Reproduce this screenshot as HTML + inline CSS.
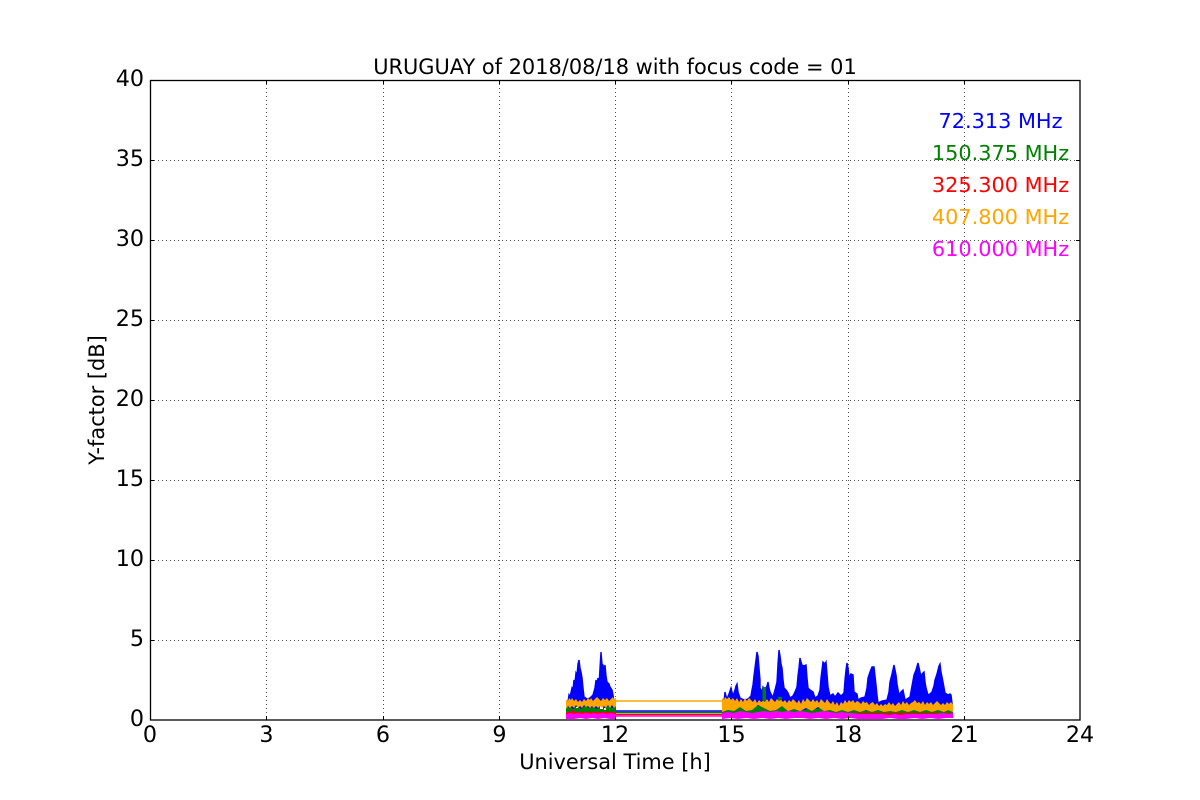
<!DOCTYPE html>
<html><head><meta charset="utf-8"><title>URUGUAY</title>
<style>html,body{margin:0;padding:0;background:#fff}svg{display:block}text{font-family:"DejaVu Sans",sans-serif;fill:#000}</style></head>
<body>
<svg width="1200" height="800" viewBox="0 0 1200 800" xmlns="http://www.w3.org/2000/svg">
<rect width="1200" height="800" fill="#fff"/>
<!-- grid -->
<g stroke="#000" stroke-width="1" stroke-dasharray="1 3" fill="none" opacity=".68">
<path d="M266.5 80V720M383.5 80V720M499.5 80V720M615.5 80V720M731.5 80V720M848.5 80V720M964.5 80V720"/>
<path d="M150 640.5H1080M150 560.5H1080M150 480.5H1080M150 400.5H1080M150 320.5H1080M150 240.5H1080M150 160.5H1080"/>
</g>
<!-- data horizontal connecting lines -->
<g fill="none" stroke-width="1.6">
<path d="M616 701H722" stroke="#ffa500"/>
<path d="M616 711H722" stroke="#0000ff"/>
<path d="M616 712.5H722" stroke="#008000"/>
<path d="M616 714.5H722" stroke="#ff0000"/>
<path d="M616 716H722" stroke="#ff00ff"/>
</g>
<!-- blue -->
<g fill="#0000ff" stroke="#0000ff" stroke-width="1.4" stroke-linejoin="miter">
<polygon points="568,702 569,695 570,697 572,688 573,690 574,680 575,683 576,673 577,675 578,664 579,660 580,668 581,672 582,678 583,688 584,697 587,699 590,698 593,695 595,688 596,680 597,684 598,678 599,686 600,668 601,652 602,664 603,665 604,670 605,665 606,676 607,682 609,684 610,687 612,690 613,695 614,702 614,711 568,711"/>
<polygon points="724,702 725,692 726,696 727,699 729,694 731,688 733,696 735,690 736,686 737,684 738,692 740,698 744,700 748,699 751,696 752,690 753,685 754,676 755,668 756,660 757,652 758,656 759,668 760,680 760,688 762,692 763,687 765,690 767,686 768,682 769,688 770,692 772,696 773,697 775,690 777,682 778,664 779,650 780,656 781,664 782,668 783,680 784,688 786,690 788,693 790,698 793,696 795,692 797,687 798,676 799,668 800,658 801,662 802,665 804,666 806,665 807,678 808,688 810,690 813,692 815,698 818,696 820,690 821,678 822,670 823,662 825,664 826,662 827,674 828,687 830,696 833,694 835,697 838,693 841,696 844,693 845,680 846,670 847,663 848,668 849,678 851,674 853,675 854,692 857,694 858,700 861,698 865,697 867,688 868,678 870,672 872,667 874,667 875,676 876,685 877,695 878,703 882,701 887,700 889,692 890,682 892,674 894,665 896,675 897,684 899,695 901,692 903,690 905,700 907,699 910,697 912,686 914,675 916,670 918,663 920,672 921,678 922,674 924,672 925,682 926,688 928,695 930,694 932,692 934,686 935,680 937,674 939,666 940,664 941,672 943,682 945,693 948,695 950,694 951,695 952,703 952,711 724,711"/>
</g>
<!-- green -->
<g fill="#008000">
<polygon points="566,708 570,707 573,709 577,706 581,709 585,706 589,708 593,707 597,709 601,706 605,708 609,706 612,708 616,706 616,713 566,713"/>
<polygon points="722,706 726,707 729,704 733,706 737,705 741,706 745,706 749,707 753,704 757,706 760,706 762,704 765,702 768,704 772,707 776,706 780,706 784,706 788,709 792,708 796,709 800,708 805,710 810,708 815,709 820,708 830,710 840,707 850,709 860,710 870,711 880,710 890,711 900,710 910,709 920,710 930,708 940,710 953,709 953,715 722,715"/>
<path d="M762.500 687h3.500v18h-3.500z"/><path d="M778 697h4v8h-4z"/>
</g>
<!-- red -->
<g fill="#ff0000"><rect x="566" y="712" width="50" height="2"/><rect x="571" y="710" width="2" height="4"/><rect x="722" y="713" width="231" height="2"/></g>
<!-- white specks -->
<g fill="#fff">
<rect x="600" y="706" width="3" height="3"/><rect x="604" y="708" width="2" height="2"/><rect x="576" y="707" width="2" height="1"/>
</g>
<!-- orange -->
<g fill="#ffa500">
<polygon points="566,700 568,701 569,698 571,700 572,698 574,701 576,699 578,702 580,700 582,702 584,699 586,701 588,698 590,700 591,698 593,701 595,699 597,697 599,699 601,701 603,698 605,700 607,698 609,701 611,699 613,697 614,699 616,698 616,706 614,708 612,705 610,708 608,705 606,708 604,706 602,708 600,706 598,708 596,706 594,708 592,706 590,708 588,706 586,707 584,705 582,708 580,706 578,708 576,705 574,708 572,706 570,708 568,706 566,709"/>
<polygon points="722,698 724,700 725,697 727,699 729,697 731,700 733,698 735,701 737,698 739,702 741,699 743,702 745,698 747,701 749,698 751,700 753,702 755,699 757,703 759,700 761,702 763,701 765,702 767,699 769,702 771,698 773,700 775,702 777,699 779,701 781,700 783,702 785,700 787,703 789,700 791,702 793,699 795,701 797,703 799,700 801,704 803,699 805,702 807,698 809,700 811,702 813,699 815,702 817,700 819,703 821,699 823,701 825,703 827,699 829,702 831,704 833,701 835,705 837,702 839,706 841,702 843,704 845,700 847,703 849,700 851,702 853,700 855,703 857,701 859,702 861,704 863,701 865,703 867,702 869,705 871,703 873,702 875,705 877,703 879,706 881,704 883,706 885,704 887,705 889,702 891,705 893,703 895,706 897,704 899,702 901,705 903,701 905,704 907,702 909,705 911,703 913,702 915,700 917,703 919,702 921,704 923,701 925,705 927,702 929,704 931,702 933,705 935,703 937,701 939,703 941,705 943,703 945,705 947,702 949,704 951,702 953,705 953,712 948,710 944,712 938,710 932,712 926,710 920,712 914,710 908,712 902,710 896,712 890,711 884,712 878,710 872,712 866,710 860,712 854,710 848,712 842,710 836,712 830,710 824,711 818,707 812,711 806,708 800,711 794,709 788,711 782,706 776,710 770,711 764,708 758,705 752,710 746,711 740,707 734,711 728,710 722,712"/>
</g>
<!-- magenta -->
<g fill="#ff00ff">
<polygon points="566,714 570,713 574,714 578,713 582,714 586,713 590,714 594,713 598,714 602,713 606,714 610,713 616,714 616,719 610,719 604,718 598,719 592,718 586,719 580,718 574,719 566,719"/>
<polygon points="722,713 728,712 734,713 740,711 746,712 752,713 758,712 764,711 770,712 776,711 782,712 788,711 794,712 800,711 806,712 812,713 818,712 824,711 830,712 836,713 842,712 848,713 852,713 858,714 864,714 870,714 876,714 882,714 888,715 894,714 900,715 906,714 912,714 918,714 924,714 930,714 936,714 942,713 948,714 953,713 953,718 946,718 938,719 930,718 922,719 914,718 906,719 898,719 890,718 882,719 874,719 866,719 858,719 850,718 842,719 834,718 826,719 818,718 810,719 802,718 794,718 786,719 778,718 770,719 762,718 754,719 746,718 738,719 730,718 722,719"/>
</g>
<!-- frame -->
<rect x="150.5" y="80.5" width="929.5" height="639.5" fill="none" stroke="#000" stroke-width="1.3"/>
<!-- ticks -->
<g stroke="#000" stroke-width="1" fill="none">
<path d="M266.5 80v4M383.500 80v4M499.500 80v4M615.500 80v4M731.500 80v4M848.500 80v4M964.500 80v4M266.500 720v-4M383.500 720v-4M499.500 720v-4M615.500 720v-4M731.500 720v-4M848.500 720v-4M964.500 720v-4"/>
<path d="M150 640.500h4M150 560.500h4M150 480.500h4M150 400.500h4M150 320.500h4M150 240.500h4M150 160.500h4M1080 640.500h-4M1080 560.500h-4M1080 480.500h-4M1080 400.500h-4M1080 320.500h-4M1080 240.500h-4M1080 160.500h-4"/>
</g>
<!-- title -->
<text x="615" y="74" font-size="20.900" text-anchor="middle">URUGUAY of 2018/08/18 with focus code = 01</text>
<!-- axis labels -->
<text x="615" y="769" font-size="20.900" text-anchor="middle">Universal Time [h]</text>
<text transform="translate(104 400) rotate(-90)" font-size="20.900" text-anchor="middle">Y-factor [dB]</text>
<!-- x ticks -->
<g font-size="22.220" text-anchor="middle">
<text x="150" y="742">0</text><text x="266.500" y="742">3</text><text x="383" y="742">6</text><text x="499.500" y="742">9</text><text x="615" y="742">12</text><text x="731.500" y="742">15</text><text x="848" y="742">18</text><text x="964.500" y="742">21</text><text x="1080" y="742">24</text>
</g>
<!-- y ticks -->
<g font-size="22.220" text-anchor="end">
<text x="144" y="726">0</text><text x="144" y="646">5</text><text x="144" y="566">10</text><text x="144" y="486">15</text><text x="144" y="406">20</text><text x="144" y="326">25</text><text x="144" y="246">30</text><text x="144" y="166">35</text><text x="144" y="86">40</text>
</g>
<!-- legend -->
<g font-size="20.830" text-anchor="middle">
<text x="1000.500" y="128" style="fill:#0000ff">72.313 MHz</text>
<text x="1000.500" y="160" style="fill:#008000">150.375 MHz</text>
<text x="1000.500" y="192" style="fill:#ff0000">325.300 MHz</text>
<text x="1000.500" y="224" style="fill:#ffa500">407.800 MHz</text>
<text x="1000.500" y="256" style="fill:#ff00ff">610.000 MHz</text>
</g>
</svg>
</body></html>
